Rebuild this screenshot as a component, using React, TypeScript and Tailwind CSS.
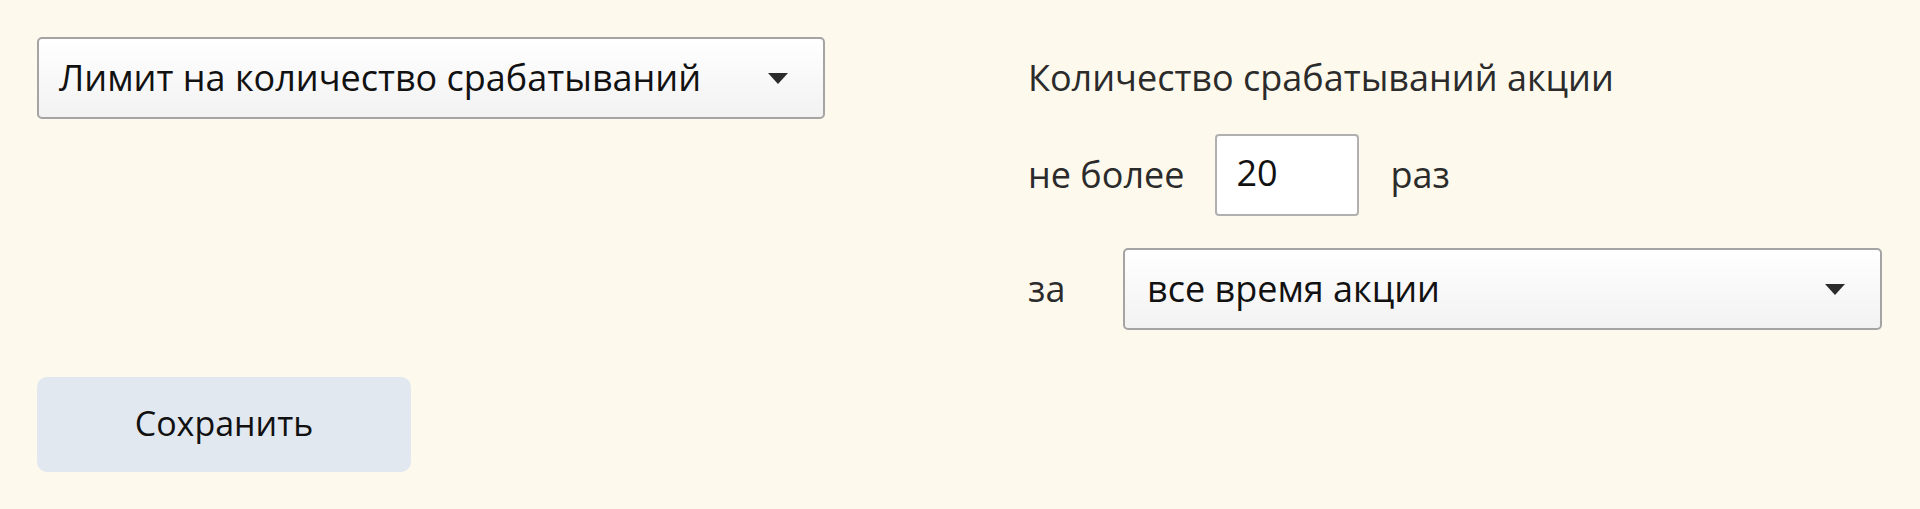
const font = { fontFamily: '"Open Sans", "Noto Sans", sans-serif' };

function Caret() {
  return (
    <svg width="20" height="11" viewBox="0 0 20 11" className="shrink-0">
      <path d="M0 0h20L10 11z" fill="#2b2b2b" />
    </svg>
  );
}

function Select({ value, className = "" }: { value: string; className?: string }) {
  return (
    <div
      className={`flex h-[82px] items-center justify-between rounded-[5px] border-2 border-[#a4a4a4] bg-gradient-to-b from-white to-[#f2f2f2] pl-[20px] pr-[35px] text-[36px] text-[#111] ${className}`}
    >
      <span className="-mt-[1px]">{value}</span>
      <Caret />
    </div>
  );
}

export default function App() {
  return (
    <div className="flex h-[509px] bg-[#fdf9ec] p-[37px] text-[36px] leading-none" style={font}>
      <div className="flex w-[788px] flex-col justify-between">
        <Select value="Лимит на количество срабатываний" />
        <button className="h-[95px] w-[374px] rounded-[10px] bg-[#e1e8f0] pb-[4px] text-[34px] text-[#111]">
          Сохранить
        </button>
      </div>

      <div className="ml-[203px] flex w-[759px] flex-1 flex-col text-[#2b2b2b]">
        <div className="flex h-[82px] items-center">Количество срабатываний акции</div>

        <div className="mt-[15px] flex h-[82px] items-center">
          <span className="mr-[31px]">не более</span>
          <div className="flex h-[82px] w-[144px] items-center rounded-[4px] border-2 border-[#b0b0b0] bg-white pb-[5px] pl-[19px] text-[#111]">
            20
          </div>
          <span className="ml-[31px]">раз</span>
        </div>

        <div className="mt-[32px] flex items-center">
          <span className="w-[95px] shrink-0">за</span>
          <Select value="все время акции" className="w-[759px] pl-[22px]" />
        </div>
      </div>
    </div>
  );
}
